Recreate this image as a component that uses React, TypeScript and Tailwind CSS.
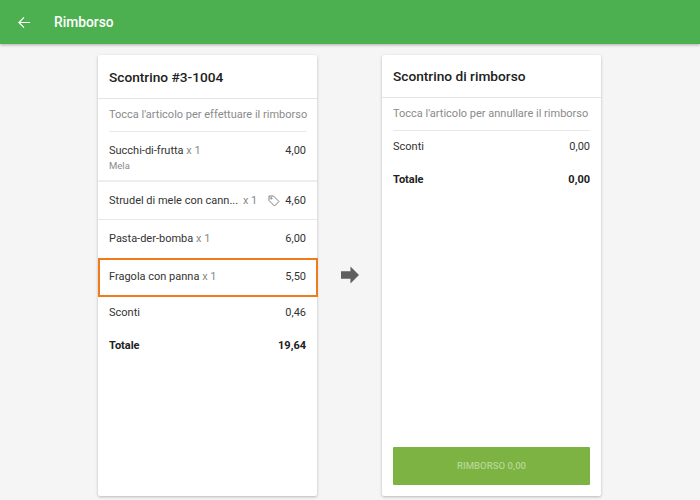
import React from "react";

export default function App() {
  return (
    <div className="w-[700px] h-[500px] overflow-hidden bg-[#f5f5f5] flex flex-col font-['Roboto',sans-serif]">
      <header className="h-[44px] shrink-0 bg-[#4caf50] flex items-center pl-[18px] shadow-[0_1px_3px_rgba(0,0,0,0.3)] z-10">
        <svg width="13" height="13" viewBox="0 0 14 14" fill="none" stroke="white" strokeWidth="1.3">
          <path d="M13 7H1.500M6.500 1.500 1 7l5.500 5.500" />
        </svg>
        <span className="ml-[23px] text-[13.800px] font-medium text-white">Rimborso</span>
      </header>
      <main className="flex-1 flex items-start pl-[98px] pt-[11px]">
        <section className="w-[219px] h-[441px] bg-white rounded-[2px] shadow-[0_1px_3px_rgba(0,0,0,0.25)] flex flex-col">
          <div className="h-[44px] shrink-0 px-[11px] pt-[1px] flex items-center text-[13.700px] font-medium text-[#212121] border-b border-[#e4e4e4]">Scontrino #3-1004</div>
          <div className="mx-[11px] h-[33px] shrink-0 flex items-center text-[11px] text-[#8a8a8a] border-b border-[#e8e8e8] whitespace-nowrap">Tocca l'articolo per effettuare il rimborso</div>
          <div className="h-[50px] shrink-0 pt-[11px] px-[11px] border-b-2 border-[#eeeeee]">
            <div className="flex justify-between text-[11px] leading-[16px] text-[#333333]">
              <span>Succhi-di-frutta <span className="text-[#8a8a8a]">x 1</span></span>
              <span>4,00</span>
            </div>
            <div className="text-[9.500px] leading-[13px] text-[#8a8a8a]">Mela</div>
          </div>
          <div className="h-[38px] shrink-0 px-[11px] pt-[1px] flex items-center text-[11px] text-[#333333] border-b border-[#e8e8e8]">
            <span className="flex-1 whitespace-nowrap">Strudel di mele con cann...</span>
            <span className="text-[#8a8a8a] mr-[11px] whitespace-nowrap">x 1</span>
            <svg width="12" height="12" viewBox="0 0 12 12" fill="none" stroke="#6f6f6f" strokeWidth="0.9" className="mr-[5px] mb-[1px]">
              <path d="M1 1h4.500L11 6.500 6.500 11 1 5.500Z" />
              <circle cx="3.300" cy="3.300" r="0.700" />
            </svg>
            <span>4,60</span>
          </div>
          <div className="h-[38px] shrink-0 px-[11px] pt-[1px] flex items-center justify-between text-[11px] text-[#333333]">
            <span>Pasta-der-bomba <span className="text-[#8a8a8a]">x 1</span></span>
            <span>6,00</span>
          </div>
          <div className="h-[39px] shrink-0 px-[9px] flex items-center justify-between text-[11px] text-[#333333] border-2 border-[#ef7b1a] w-[220px]">
            <span>Fragola con panna <span className="text-[#8a8a8a]">x 1</span></span>
            <span className="mr-[1px]">5,50</span>
          </div>
          <div className="h-[33px] shrink-0 px-[11px] flex items-center justify-between text-[11px] text-[#333333]">
            <span>Sconti</span>
            <span>0,46</span>
          </div>
          <div className="h-[33px] shrink-0 px-[11px] flex items-center justify-between text-[11px] font-bold text-[#212121]">
            <span>Totale</span>
            <span>19,64</span>
          </div>
        </section>
        <div className="w-[65px] shrink-0 h-[441px] flex items-center justify-center">
          <svg width="18" height="18" viewBox="0 0 19 18" className="mt-[-1px]">
            <path d="M0 5h10V0l9 9-9 9v-5H0Z" fill="#5f5f5f" />
          </svg>
        </div>
        <section className="w-[219px] h-[441px] bg-white rounded-[2px] shadow-[0_1px_3px_rgba(0,0,0,0.25)] flex flex-col">
          <div className="h-[43px] shrink-0 px-[11px] pt-[1px] flex items-center text-[13.700px] font-medium text-[#212121] border-b border-[#e4e4e4]">Scontrino di rimborso</div>
          <div className="mx-[11px] h-[33px] shrink-0 flex items-center text-[11px] text-[#8a8a8a] border-b border-[#e8e8e8] whitespace-nowrap">Tocca l'articolo per annullare il rimborso</div>
          <div className="h-[33px] shrink-0 px-[11px] flex items-center justify-between text-[11px] text-[#333333]">
            <span>Sconti</span>
            <span>0,00</span>
          </div>
          <div className="h-[33px] shrink-0 px-[11px] flex items-center justify-between text-[11px] font-bold text-[#212121]">
            <span>Totale</span>
            <span>0,00</span>
          </div>
          <div className="flex-1" />
          <button className="mx-[11px] mb-[11px] h-[38px] shrink-0 bg-[#7cb342] rounded-[1px] text-[9.600px] font-medium text-[#b7d695]">RIMBORSO 0,00</button>
        </section>
      </main>
    </div>
  );
}
